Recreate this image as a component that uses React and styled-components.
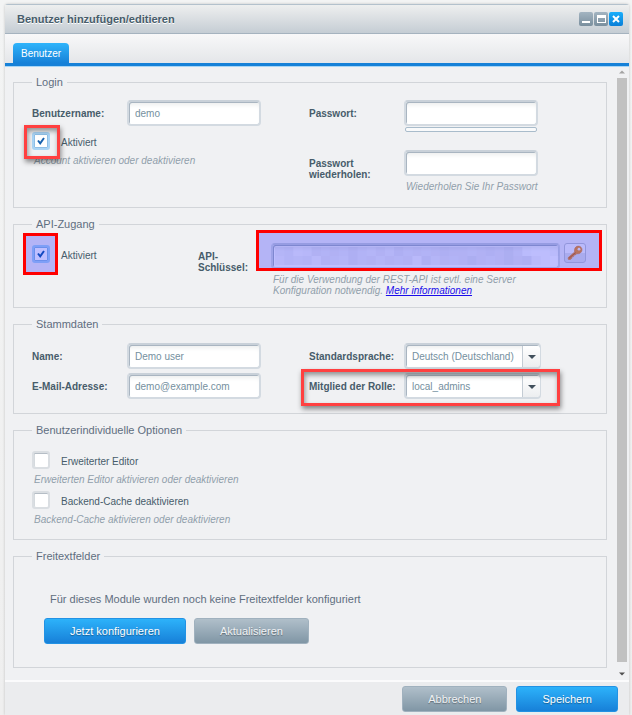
import React, { useState } from "react";
import styled, { createGlobalStyle, css } from "styled-components";

const GlobalStyle = createGlobalStyle`
  * {
    box-sizing: border-box;
  }

  body {
    margin: 0;
    background: linear-gradient(#f3f4f4, #efefef);
    font-family: "Liberation Sans", Arial, sans-serif;
    font-size: 10px;
    color: #475c6a;
  }
`;

// Window
const Page = styled.div`
  min-height: 100vh;
  padding: 4px 3px 0 5px;
  display: flex;
`;

const Window = styled.main`
  flex: 1;
  min-width: 0;
  display: flex;
  flex-direction: column;
  background: #f0f1f3;
  border-top: 1px solid #b3c1cc;
  border-radius: 3px 3px 0 0;
  box-shadow: 0 0 3px rgba(0, 0, 0, 0.2);
`;

const TitleBar = styled.header`
  height: 29px;
  padding: 0 6px 0 12px;
  display: flex;
  align-items: center;
  justify-content: space-between;
  background: linear-gradient(#eeefef, #c5cdd4);
  border-bottom: 1px solid #a5b3bf;
`;

const Title = styled.h1`
  margin: 0;
  font-size: 11px;
  line-height: 14px;
  color: #475c6a;
  text-shadow: 0 1px 0 #ffffff;
`;

const WindowTools = styled.div`
  display: flex;
  gap: 1px;
`;

const ToolButton = styled.button`
  width: 14px;
  height: 14px;
  padding: 0;
  display: flex;
  border: none;
  border-radius: 2px;
  background: ${(props) =>
    props.$primary ? "linear-gradient(#19aefb, #0a7fd8)" : "linear-gradient(#a3b4c1, #7a8f9e)"};
`;

const TabBar = styled.nav`
  height: 32px;
  padding: 9px 8px 0;
  background: linear-gradient(#f8f8f9, #e4e6e9);
  border-bottom: 3px solid #1681d8;
  box-shadow: 0 1px 0 #a8d5f5;
`;

const Tab = styled.button`
  height: 20px;
  padding: 0 8px;
  border: none;
  border-radius: 4px 4px 0 0;
  background: linear-gradient(#2fb4fb, #1681d8);
  font: 10px "Liberation Sans", Arial, sans-serif;
  color: #ffffff;
`;

const Body = styled.div`
  flex: 1;
  display: flex;
  gap: 8px;
  padding-left: 8px;
`;

const Form = styled.form`
  flex: 1;
  min-width: 0;
  display: flex;
  flex-direction: column;
  gap: 9px;
  padding: 9px 0 12px;
`;

const ScrollTrack = styled.div`
  width: 14px;
  padding: 4px 2px 4px;
  display: flex;
  flex-direction: column;
  align-items: center;
  gap: 4px;
`;

const ScrollThumb = styled.div`
  flex: 1;
  width: 10px;
  margin-bottom: 6px;
  background: #c1c1c1;
`;

// Form parts
const Fieldset = styled.fieldset`
  min-width: 0;
  margin: 0;
  padding: ${(props) => props.$top}px 20px ${(props) => props.$bottom}px 18px;
  border: 1px solid #d2d5d9;
`;

const Legend = styled.legend`
  padding: 0 4px;
  font-size: 11px;
  line-height: 14px;
  color: #5f6e80;
`;

const Columns = styled.div`
  display: grid;
  grid-template-columns: 1fr 1fr;
`;

const Column = styled.div`
  display: flex;
  flex-direction: column;
  gap: ${(props) => props.$gap || 4}px;
`;

const Field = styled.div`
  position: relative;
  display: flex;
  align-items: flex-start;
`;

const FieldLabel = styled.label`
  flex: none;
  width: ${(props) => props.$width || 95}px;
  padding-top: 8px;
  font-weight: bold;
  line-height: 11px;
`;

const Control = styled.div`
  flex: ${(props) => (props.$grow ? "1" : "none")};
  min-width: 0;
`;

const boxStyle = css`
  height: 26px;
  border: 2px solid #d3dae1;
  border-top-color: #c9d1d9;
  border-radius: 4px;
  background: #ffffff;
  box-shadow: inset 1px 1px 0 #a9b5c1, inset 0 5px 4px -2px #eceeee;
  font: 10px "Liberation Sans", Arial, sans-serif;
  color: #7590a0;
`;

const TextInput = styled.input`
  ${boxStyle}
  display: block;
  width: ${(props) => props.$width || "134px"};
  padding: 0 6px;
`;

const StrengthBar = styled.div`
  width: 132px;
  height: 5px;
  margin: 1px 0 0 1px;
  border: 1px solid #a9bccb;
  border-radius: 2px;
  background: #f9fafb;
`;

const Hint = styled.p`
  max-width: 250px;
  margin: 5px 0 0;
  padding-left: 2px;
  font-style: italic;
  line-height: 11px;
  color: #919fab;
`;

const Link = styled.a`
  color: #1a0dea;
`;

const SelectBox = styled.div`
  position: relative;
  width: 137px;
`;

const Select = styled.select`
  ${boxStyle}
  display: block;
  width: 100%;
  padding: 0 20px 0 6px;
  appearance: none;
`;

const SelectArrow = styled.span`
  position: absolute;
  top: 3px;
  right: 1px;
  width: 18px;
  height: 21px;
  display: flex;
  align-items: center;
  justify-content: center;
  border-left: 1px solid #c4ccd4;
  border-radius: 0 3px 3px 0;
  background: linear-gradient(#ffffff, #eceef0);
  pointer-events: none;
`;

const CheckRow = styled.div`
  position: relative;
  display: flex;
  align-items: center;
  gap: 11px;
`;

const CheckLabel = styled.label`
  padding-top: 3px;
  line-height: 12px;
`;

const CheckInput = styled.input`
  appearance: none;
  width: 18px;
  height: 18px;
  margin: 0;
  border: 2px solid #dadee2;
  border-radius: 3px;
  background: #ffffff;
  box-shadow: inset 0 1px 0 #b5bdc5, inset 1px 0 0 #d5dade;

  &:checked {
    border-color: #a9d4f5;
    background: #ffffff
      url("data:image/svg+xml,%3Csvg xmlns='http://www.w3.org/2000/svg' viewBox='0 0 14 14'%3E%3Cpath d='M4 6.5l2.2 2.8L10 4' fill='none' stroke='%231862ae' stroke-width='2'/%3E%3C/svg%3E")
      center / 14px 14px no-repeat;
    box-shadow: inset 0 0 0 1px #8fbfe6;
  }
`;

const Options = styled.div`
  display: flex;
  flex-direction: column;
  gap: 6px;
`;

const ApiRow = styled.div`
  display: flex;
  align-items: flex-start;
`;

const ApiToggle = styled.div`
  flex: none;
  width: 166px;
  padding-top: 2px;
`;

const KeyRow = styled.div`
  position: relative;
  display: flex;
  gap: 4px;
`;

const KeyField = styled.div`
  position: relative;
  flex: 1;
`;

const Mosaic = styled.svg`
  position: absolute;
  top: 4px;
  left: 4px;
  width: 284px;
  height: 18px;
  pointer-events: none;
`;

const KeyButton = styled.button`
  width: 22px;
  height: 20px;
  padding: 0;
  display: flex;
  align-items: center;
  justify-content: center;
  border: 1px solid #c3c8d0;
  border-radius: 3px;
  background: linear-gradient(#f8f9fa 50%, #e2e4e8 50%);
`;

// Marker frames drawn over the controls
const Marker = styled.span`
  position: absolute;
  inset: ${(props) => props.$inset};
  width: ${(props) => props.$width || "auto"};
  border: 3px solid ${(props) => (props.$filled ? "#ff0000" : "#ff4040")};
  background: ${(props) => (props.$filled ? "rgba(0, 0, 255, 0.25)" : "none")};
  pointer-events: none;
  z-index: 1;

  ${(props) =>
    !props.$filled &&
    css`
      box-shadow: 1px 3px 5px rgba(0, 0, 0, 0.45), inset 1px 3px 5px rgba(0, 0, 0, 0.4);
    `}
`;

const EmptyText = styled.p`
  margin: 0 0 12px 18px;
  font-size: 11px;
  line-height: 14px;
  color: #5f6e80;
`;

const ButtonRow = styled.div`
  display: flex;
  gap: 8px;
  padding-left: 12px;
`;

const Button = styled.button`
  height: 26px;
  padding: 0 25px;
  border: 1px solid ${(props) => (props.$primary ? "#2292e4" : "#a0b1be")};
  border-radius: 3px;
  background: ${(props) =>
    props.$primary ? "linear-gradient(#2db2fa, #1780d8)" : "linear-gradient(#b0bfca, #8096a5)"};
  font: 11px "Liberation Sans", Arial, sans-serif;
  color: ${(props) => (props.$primary ? "#ffffff" : "#f0f2f4")};
  text-shadow: 0 1px 1px rgba(0, 0, 0, 0.35);
  white-space: nowrap;
`;

const Footer = styled.footer`
  display: flex;
  justify-content: flex-end;
  gap: 9px;
  padding: 4px 11px 3px;
  border-top: 2px solid #fbfbfc;
  background: #ebecee;
`;

const cells = [
  5, 6, 3, 4, 7, 6, 7, 6, 8, 6, 5, 7, 5, 8, 6, 7, 6, 7, 8, 7, 7, 6, 7, 8, 7, 9, 6, 2, 1, 1, 2,
  4, 6, 5, 6, 3, 7, 6, 5, 8, 6, 7, 5, 7, 6, 7, 3, 8, 5, 7, 6, 7, 9, 7, 6, 7, 9, 7, 8, 3, 1, 0,
];

const Caret = ({ up, color = "#42505c", size = 8 }) => (
  <svg width={size} height="4" viewBox="0 0 8 4" aria-hidden="true">
    <path d={up ? "M0 4l4-4 4 4z" : "M0 0h8l-4 4z"} fill={color} />
  </svg>
);

const KeyIcon = () => (
  <svg width="16" height="16" viewBox="0 0 16 16" aria-hidden="true">
    <path
      d="M1 12.8L7.6 7C7 4.2 8.200 1.200 11 1.100c2.500 0 4.200 1.700 4 4-.2 2.700-2.700 4-5.400 3.600L8.400 10l-1.500.1-.3 1.500-1.600.2-.2 1.500-1.500 1.200H1.400z"
      fill="#f59a2c"
      stroke="#e08a30"
      strokeWidth="0.6"
    />
    <circle cx="12" cy="4.200" r="1.400" fill="#fff4ea" />
    <path d="M2 13.300l6.600-5.700" stroke="#c8681c" strokeWidth="0.900" />
  </svg>
);

const CheckField = ({ id, label, defaultChecked, children }) => (
  <CheckRow>
    <CheckInput type="checkbox" id={id} defaultChecked={defaultChecked} />
    <CheckLabel htmlFor={id}>{label}</CheckLabel>
    {children}
  </CheckRow>
);

const SelectField = ({ id, label, options, children }) => (
  <Field>
    <FieldLabel htmlFor={id}>{label}</FieldLabel>
    <SelectBox>
      <Select id={id}>
        {options.map((option) => (
          <option key={option}>{option}</option>
        ))}
      </Select>
      <SelectArrow>
        <Caret />
      </SelectArrow>
    </SelectBox>
    {children}
  </Field>
);

const App = () => {
  const [user, setUser] = useState({ login: "demo", name: "Demo user", email: "demo@example.com" });

  const bind = (key) => ({
    id: key,
    value: user[key],
    onChange: (e) => setUser({ ...user, [key]: e.target.value }),
  });

  return (
    <Page>
      <GlobalStyle />
      <Window>
        <TitleBar>
          <Title>Benutzer hinzufügen/editieren</Title>
          <WindowTools>
            <ToolButton aria-label="Minimieren">
              <svg width="14" height="14"><path d="M3 9h8v2H3z" fill="#fff" /></svg>
            </ToolButton>
            <ToolButton aria-label="Maximieren">
              <svg width="14" height="14">
                <path d="M3 3h9v8H3zM4 6v4h7V6z" fill="#fff" fillRule="evenodd" />
              </svg>
            </ToolButton>
            <ToolButton $primary aria-label="Schließen">
              <svg width="14" height="14">
                <path d="M4 4l6 6M10 4l-6 6" stroke="#fff" strokeWidth="2" />
              </svg>
            </ToolButton>
          </WindowTools>
        </TitleBar>

        <TabBar>
          <Tab>Benutzer</Tab>
        </TabBar>

        <Body>
          <Form id="userForm" onSubmit={(e) => e.preventDefault()}>
            <Fieldset $top={11} $bottom={15}>
              <Legend>Login</Legend>
              <Columns>
                <Column $gap={6}>
                  <Field>
                    <FieldLabel htmlFor="login">Benutzername:</FieldLabel>
                    <TextInput {...bind("login")} />
                  </Field>
                  <div>
                    <CheckField id="active" label="Aktiviert" defaultChecked>
                      <Marker $inset="-7px auto -9px -8px" $width="36px" />
                    </CheckField>
                    <Hint>Account aktivieren oder deaktivieren</Hint>
                  </div>
                </Column>
                <Column $gap={18}>
                  <Field>
                    <FieldLabel htmlFor="password">Passwort:</FieldLabel>
                    <Control>
                      <TextInput id="password" type="password" />
                      <StrengthBar />
                    </Control>
                  </Field>
                  <Field>
                    <FieldLabel htmlFor="password2">Passwort wiederholen:</FieldLabel>
                    <Control>
                      <TextInput id="password2" type="password" />
                      <Hint>Wiederholen Sie Ihr Passwort</Hint>
                    </Control>
                  </Field>
                </Column>
              </Columns>
            </Fieldset>

            <Fieldset $top={12} $bottom={11}>
              <Legend>API-Zugang</Legend>
              <ApiRow>
                <ApiToggle>
                  <CheckField id="api" label="Aktiviert" defaultChecked>
                    <Marker $filled $inset="-12px auto -12px -9px" $width="35px" />
                  </CheckField>
                </ApiToggle>
                <FieldLabel htmlFor="apiKey" $width={73}>API-<br />Schlüssel:</FieldLabel>
                <Control $grow>
                  <KeyRow>
                    <KeyField>
                      <TextInput id="apiKey" readOnly $width="100%" />
                      <Mosaic viewBox="0 0 279 18" preserveAspectRatio="none">
                        {cells.map((value, i) => (
                          <rect
                            key={i}
                            x={(i % 31) * 9}
                            y={Math.floor(i / 31) * 9}
                            width="9"
                            height="9"
                            fill="#5a6488"
                            opacity={value / 60}
                          />
                        ))}
                      </Mosaic>
                    </KeyField>
                    <KeyButton type="button" aria-label="API-Schlüssel generieren">
                      <KeyIcon />
                    </KeyButton>
                    <Marker $filled $inset="-13px -16px -2px -15px" />
                  </KeyRow>
                  <Hint>
                    Für die Verwendung der REST-API ist evtl. eine Server Konfiguration notwendig.{" "}
                    <Link href="#info">Mehr informationen</Link>
                  </Hint>
                </Control>
              </ApiRow>
            </Fieldset>

            <Fieldset $top={12} $bottom={14}>
              <Legend>Stammdaten</Legend>
              <Columns>
                <Column>
                  <Field>
                    <FieldLabel htmlFor="name">Name:</FieldLabel>
                    <TextInput {...bind("name")} />
                  </Field>
                  <Field>
                    <FieldLabel htmlFor="email">E-Mail-Adresse:</FieldLabel>
                    <TextInput {...bind("email")} />
                  </Field>
                </Column>
                <Column>
                  <SelectField
                    id="locale"
                    label="Standardsprache:"
                    options={["Deutsch (Deutschland)", "Englisch (Vereinigtes Königreich)"]}
                  />
                  <SelectField id="role" label="Mitglied der Rolle:" options={["local_admins"]}>
                    <Marker $inset="-4px 26px -7px -8px" />
                  </SelectField>
                </Column>
              </Columns>
            </Fieldset>

            <Fieldset $top={14} $bottom={14}>
              <Legend>Benutzerindividuelle Optionen</Legend>
              <Options>
                <div>
                  <CheckField id="editor" label="Erweiterter Editor" />
                  <Hint>Erweiterten Editor aktivieren oder deaktivieren</Hint>
                </div>
                <div>
                  <CheckField id="cache" label="Backend-Cache deaktivieren" />
                  <Hint>Backend-Cache aktivieren oder deaktivieren</Hint>
                </div>
              </Options>
            </Fieldset>

            <Fieldset $top={29} $bottom={23}>
              <Legend>Freitextfelder</Legend>
              <EmptyText>Für dieses Module wurden noch keine Freitextfelder konfiguriert</EmptyText>
              <ButtonRow>
                <Button type="button" $primary>Jetzt konfigurieren</Button>
                <Button type="button">Aktualisieren</Button>
              </ButtonRow>
            </Fieldset>
          </Form>

          <ScrollTrack aria-hidden="true">
            <Caret up color="#a3a3a3" size={6} />
            <ScrollThumb />
            <Caret color="#505050" size={6} />
          </ScrollTrack>
        </Body>

        <Footer>
          <Button type="button">Abbrechen</Button>
          <Button type="submit" form="userForm" $primary>Speichern</Button>
        </Footer>
      </Window>
    </Page>
  );
};

export default App;
